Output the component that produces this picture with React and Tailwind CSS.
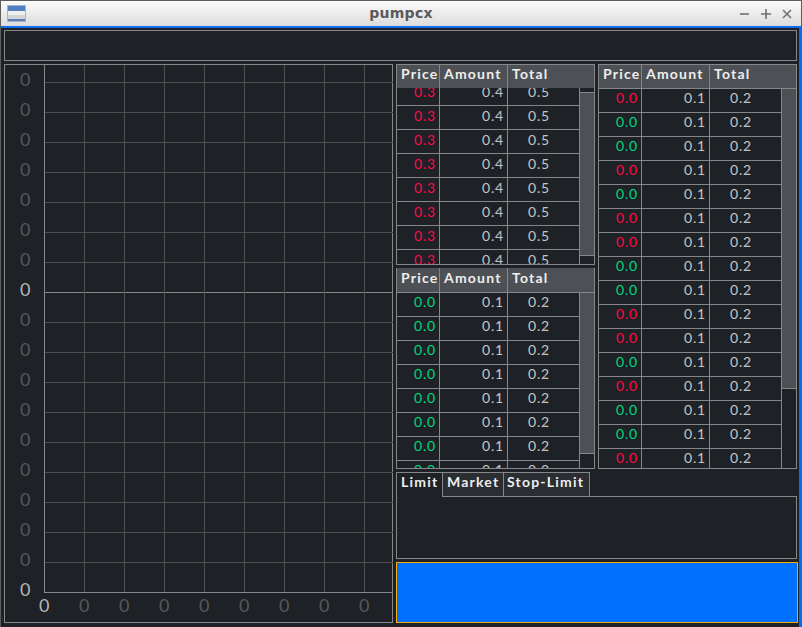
const redGreen3 = ['r', 'g', 'g', 'r', 'g', 'r', 'r', 'g', 'g', 'r', 'r', 'g', 'r', 'g', 'g', 'r', 'r'];

function Cell({ className, children }) {
  return <div className={`flex h-full border-r border-[#85878a] ${className}`}>{children}</div>;
}

function Table({ className, headerClass, rowClass, rows, offset, thumbClass, price, amount, total, colors }) {
  return (
    <div className={`flex flex-col overflow-hidden border-x border-b border-[#85878a] ${className}`}>
      <div className={`z-10 flex shrink-0 bg-[#4d5055] text-[14px] font-bold tracking-[1.2px] text-[#eeeeee] ${headerClass}`}>
        <Cell className="w-[43px] pl-[4px]">Price</Cell>
        <Cell className="w-[68px] pl-[4px]">Amount</Cell>
        <div className="pl-[4px]">Total</div>
      </div>
      <div className="flex min-h-0 flex-1">
        <div className="min-w-0 flex-1 overflow-hidden">
          <div className={offset}>
            {Array.from({ length: rows }).map((_, i) => {
              const col = colors ? colors[i] : price === '0.3' ? 'r' : 'g';
              return (
                <div key={i} className={`flex h-[24px] border-b border-[#85878a] text-[14px] tracking-[0.8px] text-[#c4c5c6] ${rowClass}`}>
                  <Cell className={`w-[43px] justify-end pr-[3px] ${col === 'r' ? 'text-[#ff0a46]' : 'text-[#00d880]'}`}>{price}</Cell>
                  <Cell className="w-[68px] justify-end pr-[3px]">{amount}</Cell>
                  <div className="pl-[20px]">{total}</div>
                </div>
              );
            })}
          </div>
        </div>
        <div className="flex w-[15px] shrink-0 flex-col border-l border-[#85878a]">
          <div className={thumbClass} />
        </div>
      </div>
    </div>
  );
}

function Chart() {
  const ys = Array.from({ length: 18 });
  const xs = Array.from({ length: 9 });
  return (
    <div className="flex h-[559px] w-[389px] flex-col border border-[#85878a]">
      <div className="flex min-h-0 flex-1">
        <div className="flex w-[39px] shrink-0 flex-col pt-[1px] text-[18px] leading-[26px]">
          {ys.map((_, i) => (
            <div key={i} className={`h-[30px] shrink-0 pl-[15px] ${i === 7 || i === 17 ? 'text-[#b5b6b7]' : 'text-[#55585b]'}`}>0</div>
          ))}
        </div>
        <svg width="349" height="528" className="shrink-0">
          {Array.from({ length: 18 }).map((_, i) => (
            <line key={i} x1="0" x2="349" y1={17.5 + i * 30} y2={17.5 + i * 30} stroke={i === 7 ? '#85878a' : '#4c4e52'} />
          ))}
          {Array.from({ length: 9 }).map((_, i) => (
            <line key={i} x1={0.5 + i * 40} x2={0.5 + i * 40} y1="0" y2="528" stroke={i === 0 ? '#85878a' : '#4c4e52'} />
          ))}
          <line x1="0" x2="349" y1="527.5" y2="527.5" stroke="#85878a" />
        </svg>
      </div>
      <div className="flex h-[29px] shrink-0 overflow-hidden pl-[34px] text-[18px] leading-[24px]">
        {xs.map((_, i) => (
          <div key={i} className={`w-[40px] shrink-0 ${i === 0 ? 'text-[#b5b6b7]' : 'text-[#55585b]'}`}>0</div>
        ))}
      </div>
    </div>
  );
}

export default function App() {
  return (
    <div className="flex h-[627px] w-[802px] flex-col overflow-hidden border-x border-t border-[#5c5c5c] bg-[#1e2126] font-['Lato',sans-serif]">
      <div className="relative flex h-[25px] shrink-0 items-center justify-between bg-gradient-to-b from-[#fbfbfb] to-[#dcdcdc] pl-[6px] pr-[8px]">
        <svg width="19" height="17" viewBox="0 0 19 17">
          <rect x="0.5" y="0.5" width="18" height="16" fill="#d5d5d8" stroke="#aab4c8" />
          <rect x="1" y="1" width="17" height="5" fill="#4f7ec0" />
          <rect x="1" y="14" width="17" height="2" fill="#5a7cb4" />
          <rect x="1" y="6" width="17" height="4" fill="#eeeeee" />
        </svg>
        <div className="absolute left-0 right-0 text-center font-['DejaVu_Sans',sans-serif] text-[14px] font-bold tracking-[0.3px] text-[#5a5a5a]">pumpcx</div>
        <div className="flex items-center gap-[9px]">
          <svg width="12" height="12" viewBox="0 0 12 12" stroke="#707070" strokeWidth="1.6"><path d="M1 6h9" /></svg>
          <svg width="12" height="12" viewBox="0 0 12 12" stroke="#707070" strokeWidth="1.6"><path d="M1 6h10M6 1v10" /></svg>
          <svg width="12" height="12" viewBox="0 0 12 12" stroke="#707070" strokeWidth="1.6"><path d="M2 2l8 8M10 2l-8 8" /></svg>
        </div>
      </div>
      <div className="flex min-h-0 flex-1 flex-col border-t-2 border-r-2 border-[#0a6cf0] pl-[3px] pr-[2px] pt-[2px]">
        <div className="h-[31px] shrink-0 border border-[#85878a]" />
        <div className="mt-[3px] flex gap-[3px]">
          <Chart />
          <div className="flex flex-col">
            <div className="flex gap-[3px]">
              <div className="flex flex-col gap-[3px]">
                <Table className="h-[201px] w-[199px] border-t" headerClass="h-[23px] leading-[17px]" rowClass="leading-[20px]" rows={8} offset="-mt-[6px]" thumbClass="mt-[4px] h-[164px] border-y border-[#85878a] bg-[#4d5055]" price="0.3" amount="0.4" total="0.5" />
                <Table className="h-[201px] w-[199px]" headerClass="h-[25px] border-b border-[#85878a] leading-[19px]" rowClass="leading-[18px]" rows={8} offset="" thumbClass="h-[161px] border-b border-[#85878a] bg-[#4d5055]" price="0.0" amount="0.1" total="0.2" />
              </div>
              <Table className="h-[405px] w-[199px] border-t" headerClass="h-[24px] border-b border-[#85878a] leading-[17px]" rowClass="leading-[18px]" rows={16} offset="" thumbClass="h-[300px] border-b border-[#85878a] bg-[#4d5055]" price="0.0" amount="0.1" total="0.2" colors={redGreen3} />
            </div>
            <div className="mt-[3px] flex h-[24px] text-[14px] font-bold leading-[18px] tracking-[1.2px] text-[#eeeeee]">
              <div className="z-10 h-[25px] w-[47px] border-x border-t border-[#85878a] bg-[#1e2126] pl-[4px]">Limit</div>
              <div className="w-[61px] border-r border-t border-[#85878a] bg-[#2a2d32] pl-[4px]">Market</div>
              <div className="w-[86px] border-r border-t border-[#85878a] bg-[#2a2d32] pl-[3px]">Stop-Limit</div>
            </div>
            <div className="h-[63px] w-[401px] border border-[#85878a]" />
            <div className="mt-[3px] h-[61px] w-[402px] border border-[#ffaa00] bg-[#0070ff]" />
          </div>
        </div>
      </div>
    </div>
  );
}
